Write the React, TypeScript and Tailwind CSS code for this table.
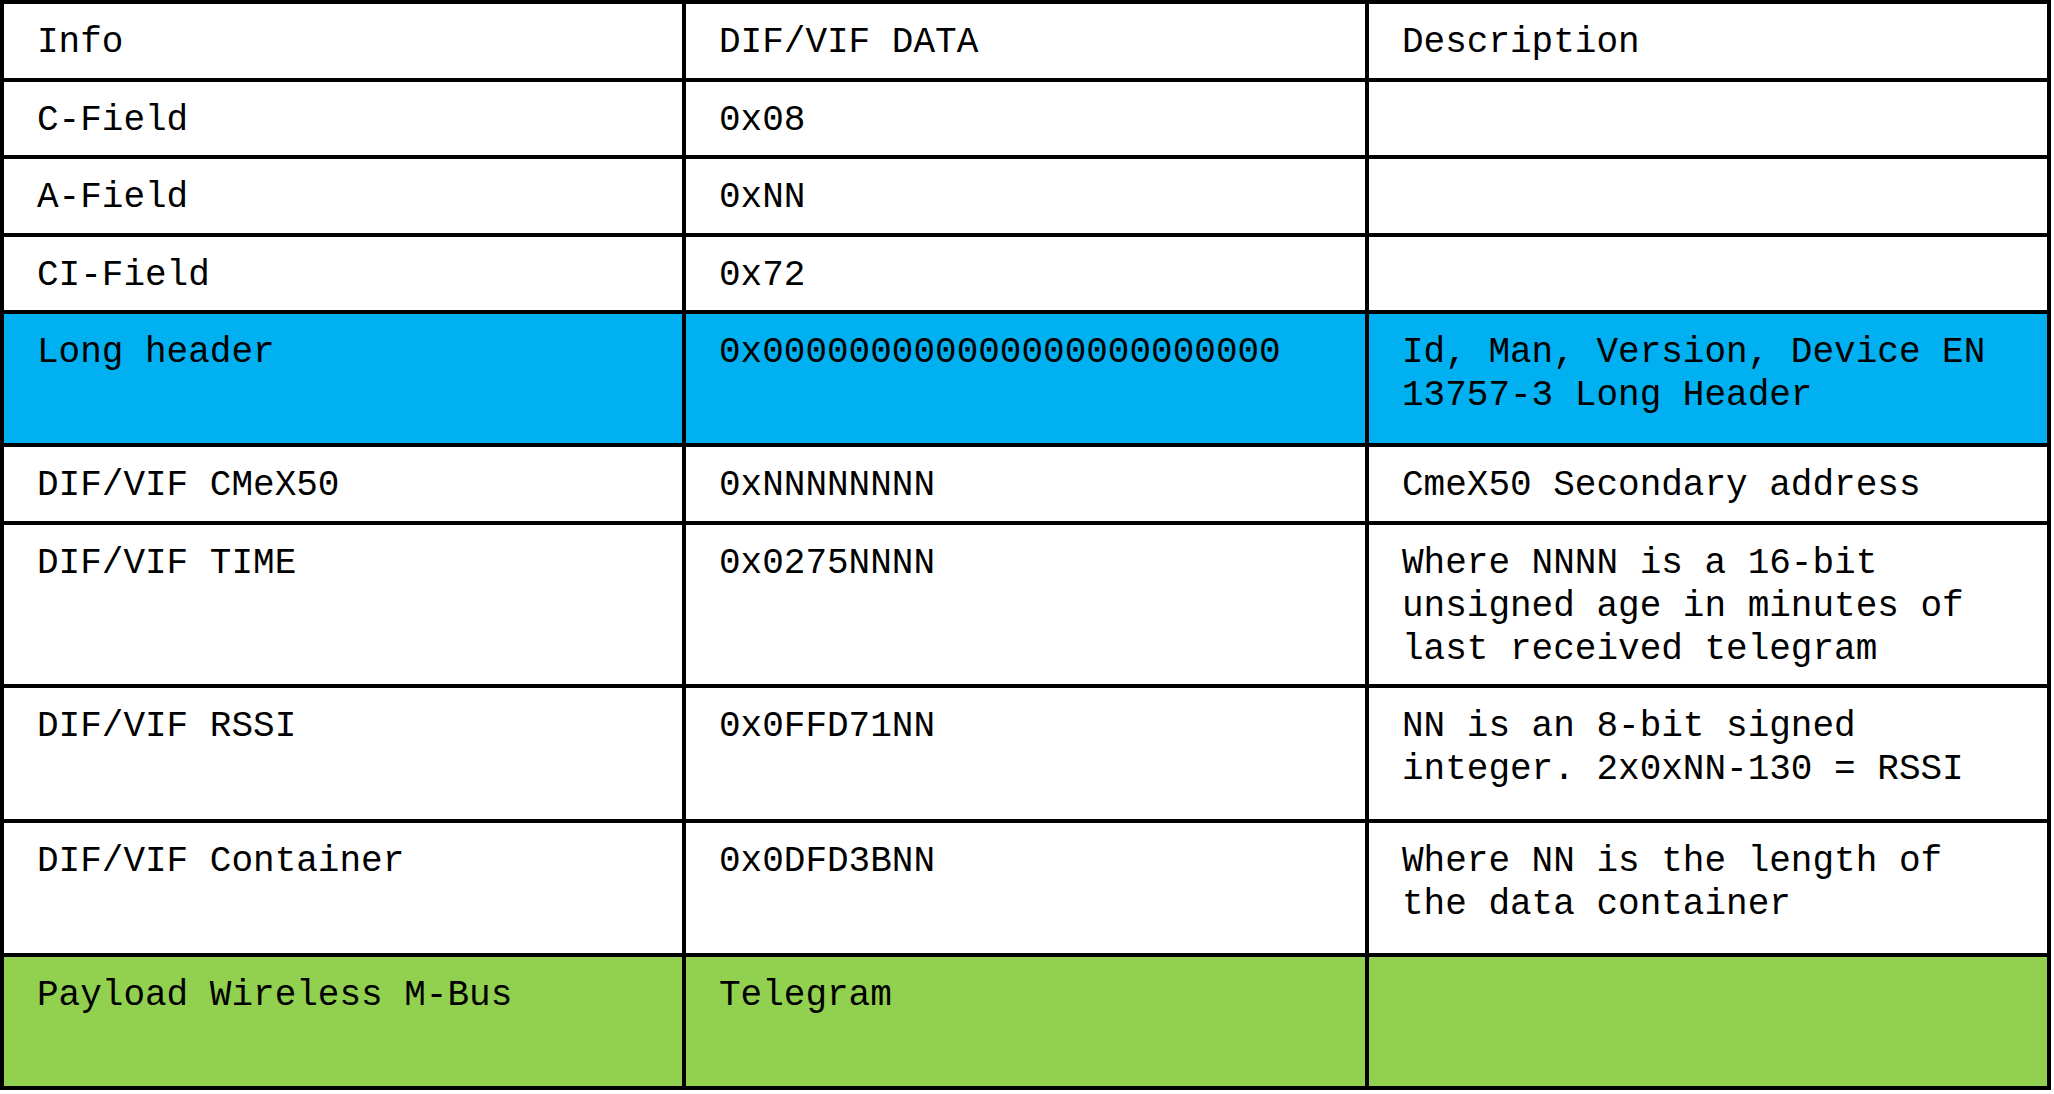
const rows: { cells: string[][]; bg: string }[] = [
  { cells: [["Info"], ["DIF/VIF DATA"], ["Description"]], bg: "bg-white" },
  { cells: [["C-Field"], ["0x08"], []], bg: "bg-white" },
  { cells: [["A-Field"], ["0xNN"], []], bg: "bg-white" },
  { cells: [["CI-Field"], ["0x72"], []], bg: "bg-white" },
  {
    cells: [["Long header"], ["0x000000000000000000000000"], ["Id, Man, Version, Device EN", "13757-3 Long Header"]],
    bg: "bg-[#00b0f0]",
  },
  { cells: [["DIF/VIF CMeX50"], ["0xNNNNNNNN"], ["CmeX50 Secondary address"]], bg: "bg-white" },
  {
    cells: [["DIF/VIF TIME"], ["0x0275NNNN"], ["Where NNNN is a 16-bit", "unsigned age in minutes of", "last received telegram"]],
    bg: "bg-white",
  },
  {
    cells: [["DIF/VIF RSSI"], ["0x0FFD71NN"], ["NN is an 8-bit signed", "integer. 2x0xNN-130 = RSSI"]],
    bg: "bg-white",
  },
  {
    cells: [["DIF/VIF Container"], ["0x0DFD3BNN"], ["Where NN is the length of", "the data container"]],
    bg: "bg-white",
  },
  { cells: [["Payload Wireless M-Bus"], ["Telegram"], []], bg: "bg-[#92d050]" },
]

export default function App() {
  return (
    <div className="min-h-screen bg-white">
      <div className="grid w-[2051px] grid-cols-[678px_679px_678px] grid-rows-[74px_73px_74px_73px_129px_74px_159px_131px_130px_129px] gap-[4px] bg-black p-[4px] font-['Liberation_Mono',monospace] text-[36px] leading-[43px] text-black">
        {rows.map((row, i) =>
          row.cells.map((lines, j) => (
            <div key={`${i}-${j}`} className={`${row.bg} whitespace-nowrap pl-[33px] pt-[17px]`}>
              {lines.map((line, k) => (
                <div key={k}>{line}</div>
              ))}
            </div>
          ))
        )}
      </div>
    </div>
  )
}
